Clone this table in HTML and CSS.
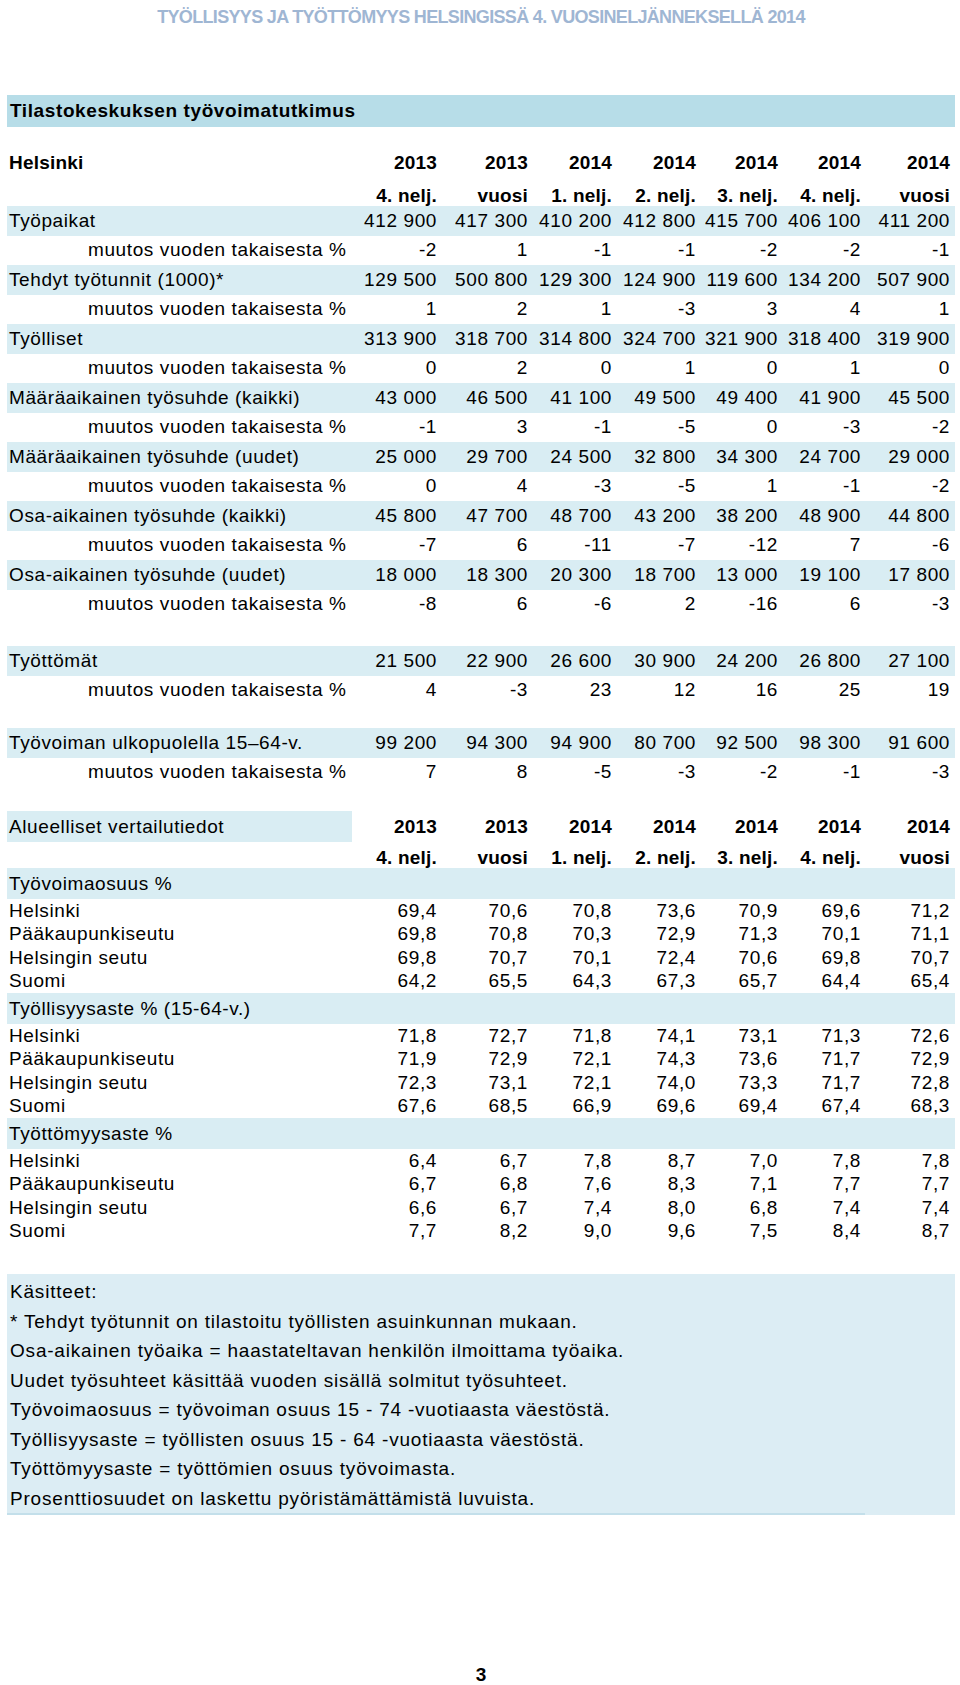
FILE: index.html
```html
<!DOCTYPE html>
<html lang="fi">
<head>
<meta charset="utf-8">
<title>Työllisyys ja työttömyys Helsingissä</title>
<link rel="stylesheet" href="styles.css">
</head>
<body>
<div class="page">
  <div class="title">TYÖLLISYYS JA TYÖTTÖMYYS HELSINGISSÄ 4. VUOSINELJÄNNEKSELLÄ 2014</div>
  <div class="bar">Tilastokeskuksen työvoimatutkimus</div>

  <div class="row head1"><span class="lbl">Helsinki</span><span>2013</span><span>2013</span><span>2014</span><span>2014</span><span>2014</span><span>2014</span><span>2014</span></div>
  <div class="row head2"><span></span><span>4. nelj.</span><span>vuosi</span><span>1. nelj.</span><span>2. nelj.</span><span>3. nelj.</span><span>4. nelj.</span><span>vuosi</span></div>

  <div class="row band"><span class="lbl">Työpaikat</span><span>412 900</span><span>417 300</span><span>410 200</span><span>412 800</span><span>415 700</span><span>406 100</span><span>411 200</span></div>
  <div class="row"><span class="ind">muutos vuoden takaisesta %</span><span>-2</span><span>1</span><span>-1</span><span>-1</span><span>-2</span><span>-2</span><span>-1</span></div>
  <div class="row band"><span class="lbl">Tehdyt työtunnit (1000)*</span><span>129 500</span><span>500 800</span><span>129 300</span><span>124 900</span><span>119 600</span><span>134 200</span><span>507 900</span></div>
  <div class="row"><span class="ind">muutos vuoden takaisesta %</span><span>1</span><span>2</span><span>1</span><span>-3</span><span>3</span><span>4</span><span>1</span></div>
  <div class="row band"><span class="lbl">Työlliset</span><span>313 900</span><span>318 700</span><span>314 800</span><span>324 700</span><span>321 900</span><span>318 400</span><span>319 900</span></div>
  <div class="row"><span class="ind">muutos vuoden takaisesta %</span><span>0</span><span>2</span><span>0</span><span>1</span><span>0</span><span>1</span><span>0</span></div>
  <div class="row band"><span class="lbl">Määräaikainen työsuhde (kaikki)</span><span>43 000</span><span>46 500</span><span>41 100</span><span>49 500</span><span>49 400</span><span>41 900</span><span>45 500</span></div>
  <div class="row"><span class="ind">muutos vuoden takaisesta %</span><span>-1</span><span>3</span><span>-1</span><span>-5</span><span>0</span><span>-3</span><span>-2</span></div>
  <div class="row band"><span class="lbl">Määräaikainen työsuhde (uudet)</span><span>25 000</span><span>29 700</span><span>24 500</span><span>32 800</span><span>34 300</span><span>24 700</span><span>29 000</span></div>
  <div class="row"><span class="ind">muutos vuoden takaisesta %</span><span>0</span><span>4</span><span>-3</span><span>-5</span><span>1</span><span>-1</span><span>-2</span></div>
  <div class="row band"><span class="lbl">Osa-aikainen työsuhde (kaikki)</span><span>45 800</span><span>47 700</span><span>48 700</span><span>43 200</span><span>38 200</span><span>48 900</span><span>44 800</span></div>
  <div class="row"><span class="ind">muutos vuoden takaisesta %</span><span>-7</span><span>6</span><span>-11</span><span>-7</span><span>-12</span><span>7</span><span>-6</span></div>
  <div class="row band"><span class="lbl">Osa-aikainen työsuhde (uudet)</span><span>18 000</span><span>18 300</span><span>20 300</span><span>18 700</span><span>13 000</span><span>19 100</span><span>17 800</span></div>
  <div class="row"><span class="ind">muutos vuoden takaisesta %</span><span>-8</span><span>6</span><span>-6</span><span>2</span><span>-16</span><span>6</span><span>-3</span></div>

  <div class="gap gap1"></div>
  <div class="row band"><span class="lbl">Työttömät</span><span>21 500</span><span>22 900</span><span>26 600</span><span>30 900</span><span>24 200</span><span>26 800</span><span>27 100</span></div>
  <div class="row"><span class="ind">muutos vuoden takaisesta %</span><span>4</span><span>-3</span><span>23</span><span>12</span><span>16</span><span>25</span><span>19</span></div>

  <div class="gap gap2"></div>
  <div class="row band"><span class="lbl">Työvoiman ulkopuolella 15–64-v.</span><span>99 200</span><span>94 300</span><span>94 900</span><span>80 700</span><span>92 500</span><span>98 300</span><span>91 600</span></div>
  <div class="row"><span class="ind">muutos vuoden takaisesta %</span><span>7</span><span>8</span><span>-5</span><span>-3</span><span>-2</span><span>-1</span><span>-3</span></div>

  <div class="gap"></div>
  <div class="row reghead1"><span class="lbl regtitle">Alueelliset vertailutiedot</span><span>2013</span><span>2013</span><span>2014</span><span>2014</span><span>2014</span><span>2014</span><span>2014</span></div>
  <div class="row head2 reghead2"><span></span><span>4. nelj.</span><span>vuosi</span><span>1. nelj.</span><span>2. nelj.</span><span>3. nelj.</span><span>4. nelj.</span><span>vuosi</span></div>

  <div class="row grp band"><span class="lbl">Työvoimaosuus %</span></div>
  <div class="row r"><span class="lbl">Helsinki</span><span>69,4</span><span>70,6</span><span>70,8</span><span>73,6</span><span>70,9</span><span>69,6</span><span>71,2</span></div>
  <div class="row r"><span class="lbl">Pääkaupunkiseutu</span><span>69,8</span><span>70,8</span><span>70,3</span><span>72,9</span><span>71,3</span><span>70,1</span><span>71,1</span></div>
  <div class="row r"><span class="lbl">Helsingin seutu</span><span>69,8</span><span>70,7</span><span>70,1</span><span>72,4</span><span>70,6</span><span>69,8</span><span>70,7</span></div>
  <div class="row r"><span class="lbl">Suomi</span><span>64,2</span><span>65,5</span><span>64,3</span><span>67,3</span><span>65,7</span><span>64,4</span><span>65,4</span></div>

  <div class="row grp band"><span class="lbl">Työllisyysaste % (15-64-v.)</span></div>
  <div class="row r"><span class="lbl">Helsinki</span><span>71,8</span><span>72,7</span><span>71,8</span><span>74,1</span><span>73,1</span><span>71,3</span><span>72,6</span></div>
  <div class="row r"><span class="lbl">Pääkaupunkiseutu</span><span>71,9</span><span>72,9</span><span>72,1</span><span>74,3</span><span>73,6</span><span>71,7</span><span>72,9</span></div>
  <div class="row r"><span class="lbl">Helsingin seutu</span><span>72,3</span><span>73,1</span><span>72,1</span><span>74,0</span><span>73,3</span><span>71,7</span><span>72,8</span></div>
  <div class="row r"><span class="lbl">Suomi</span><span>67,6</span><span>68,5</span><span>66,9</span><span>69,6</span><span>69,4</span><span>67,4</span><span>68,3</span></div>

  <div class="row grp band"><span class="lbl">Työttömyysaste %</span></div>
  <div class="row r"><span class="lbl">Helsinki</span><span>6,4</span><span>6,7</span><span>7,8</span><span>8,7</span><span>7,0</span><span>7,8</span><span>7,8</span></div>
  <div class="row r"><span class="lbl">Pääkaupunkiseutu</span><span>6,7</span><span>6,8</span><span>7,6</span><span>8,3</span><span>7,1</span><span>7,7</span><span>7,7</span></div>
  <div class="row r"><span class="lbl">Helsingin seutu</span><span>6,6</span><span>6,7</span><span>7,4</span><span>8,0</span><span>6,8</span><span>7,4</span><span>7,4</span></div>
  <div class="row r"><span class="lbl">Suomi</span><span>7,7</span><span>8,2</span><span>9,0</span><span>9,6</span><span>7,5</span><span>8,4</span><span>8,7</span></div>

  <div class="notes">
    <p>Käsitteet:</p>
    <p>* Tehdyt työtunnit on tilastoitu työllisten asuinkunnan mukaan.</p>
    <p>Osa-aikainen työaika = haastateltavan henkilön ilmoittama työaika.</p>
    <p>Uudet työsuhteet käsittää vuoden sisällä solmitut työsuhteet.</p>
    <p>Työvoimaosuus = työvoiman osuus 15 - 74 -vuotiaasta väestöstä.</p>
    <p>Työllisyysaste = työllisten osuus 15 - 64 -vuotiaasta väestöstä.</p>
    <p>Työttömyysaste = työttömien osuus työvoimasta.</p>
    <p>Prosenttiosuudet on laskettu pyöristämättämistä luvuista.</p>
    <div class="notes-rule"></div>
  </div>

  <div class="pagenum">3</div>
</div>
</body>
</html>
```

FILE: styles.css
```css
html, body {
  margin: 0;
  padding: 0;
  background: #ffffff;
}

body {
  font-family: "Liberation Sans", Arial, sans-serif;
  color: #000000;
}

.page {
  width: 960px;
  height: 1685px;
  box-sizing: border-box;
  padding: 0 5px 0 7px;
  display: flex;
  flex-direction: column;
  overflow: hidden;
}

.title {
  padding-top: 7px;
  height: 20px;
  line-height: 20px;
  text-align: center;
  color: #9fb6d3;
  font-weight: bold;
  font-size: 18px;
  letter-spacing: -0.67px;
}

.bar {
  margin-top: 68px;
  height: 32px;
  background: #b7dde8;
  display: flex;
  align-items: center;
  padding-left: 3px;
  font-weight: bold;
  font-size: 19px;
  letter-spacing: 0.6px;
}

.row {
  display: grid;
  grid-template-columns: 348px 82px 91px 84px 84px 82px 83px 89px;
  padding-right: 5px;
  height: 29.5px;
  align-items: center;
  font-size: 19px;
  letter-spacing: 0.6px;
  white-space: nowrap;
  flex: none;
}

.row > span {
  text-align: right;
}

.row > span:first-child {
  text-align: left;
}

.lbl {
  padding-left: 2px;
}

.ind {
  padding-left: 81px;
}

.band {
  background: #d9edf3;
}

.head1 {
  margin-top: 21px;
  height: 30px;
  font-weight: bold;
  letter-spacing: 0.2px;
}

.head2 {
  height: 28px;
  align-items: end;
  line-height: 20px;
  font-weight: bold;
  letter-spacing: 0.2px;
}

.reghead2 {
  height: 26px;
}

.gap {
  height: 24px;
  flex: none;
}

.gap1 {
  height: 27px;
}

.gap2 {
  height: 23px;
}

.reghead1 {
  height: 31px;
  font-weight: bold;
  letter-spacing: 0.2px;
}

.regtitle {
  align-self: stretch;
  display: flex;
  align-items: center;
  margin-right: 3px;
  background: #d9edf3;
  font-weight: normal;
  letter-spacing: 0.6px;
}

.grp {
  height: 31px;
}

.r {
  height: 23.5px;
}

.notes {
  margin-top: 31px;
  background: #dcedf4;
  padding: 3px 0 0 3px;
  font-size: 19px;
  letter-spacing: 0.8px;
  display: flex;
  flex-direction: column;
  flex: none;
}

.notes p {
  margin: 0;
  height: 29.5px;
  line-height: 29.5px;
  white-space: nowrap;
}

.notes-rule {
  margin-left: -3px;
  width: 858px;
  height: 2px;
  background: #c3dfea;
}

.pagenum {
  margin-top: 150px;
  line-height: 20px;
  text-align: center;
  font-weight: bold;
  font-size: 19px;
}
```
